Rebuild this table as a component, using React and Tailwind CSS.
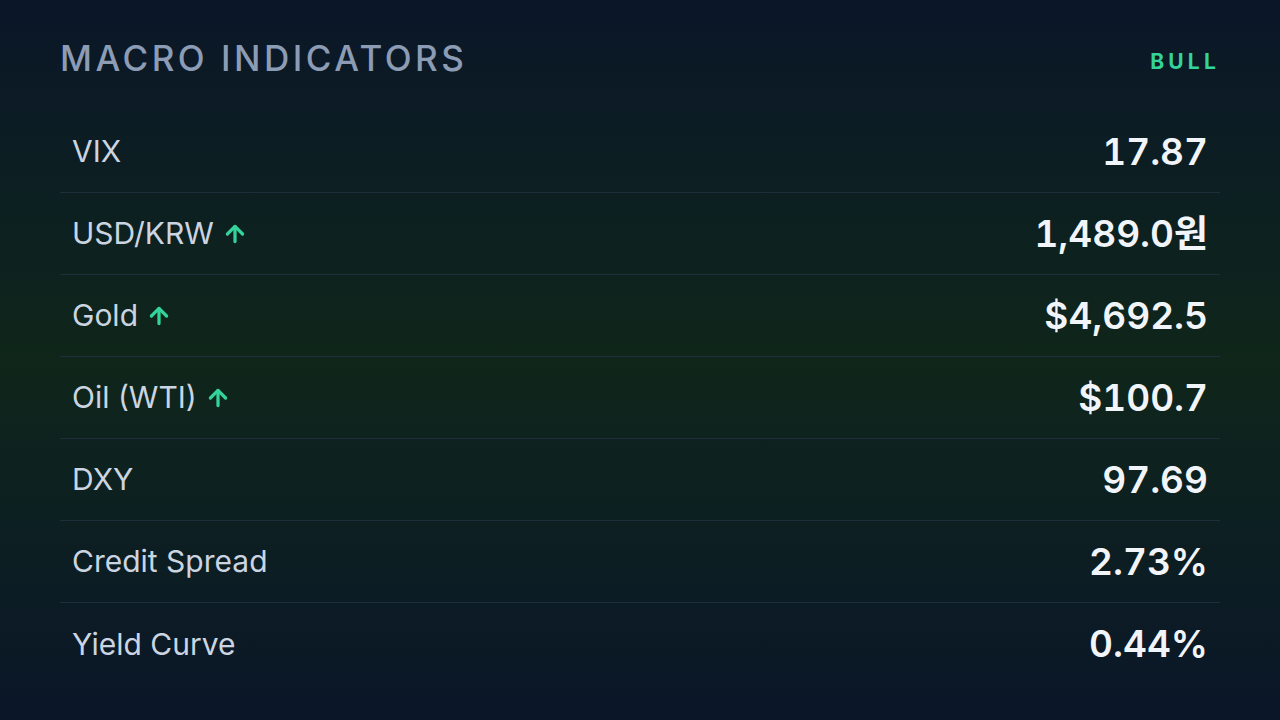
import { ArrowUp } from 'lucide-react'

const rows = [
  { label: 'VIX', value: '17.87' },
  { label: 'USD/KRW', value: '1,489.0원', up: true },
  { label: 'Gold', value: '$4,692.5', up: true },
  { label: 'Oil (WTI)', value: '$100.7', up: true },
  { label: 'DXY', value: '97.69' },
  { label: 'Credit Spread', value: '2.73%' },
  { label: 'Yield Curve', value: '0.44%' },
]

export default function App() {
  return (
    <div
      className="min-h-screen w-full bg-gradient-to-b from-[#0b1628] via-[#0f261a] to-[#0b1628] px-[60px] pt-[38px]"
      style={{ fontFamily: 'Inter, "Noto Sans CJK KR", sans-serif' }}
    >
      <div className="flex items-center justify-between">
        <h1 className="text-[35px] leading-[40px] font-medium tracking-[0.1em] text-[#8c9cb5]">
          MACRO INDICATORS
        </h1>
        <span className="mt-[8px] text-[21px] leading-[28px] font-bold tracking-[0.2em] text-[#34d399]">
          BULL
        </span>
      </div>

      <div className="mt-[33px]">
        {rows.map((r, i) => (
          <div
            key={r.label}
            className={`flex h-[82px] items-center justify-between px-3 ${i < rows.length - 1 ? 'border-b border-[#1f2e3a]' : ''}`}
          >
            <div className="flex items-center gap-[8px] text-[30px] text-[#cbd5e1]">
              <span>{r.label}</span>
              {r.up && <ArrowUp size={26} strokeWidth={3} className="text-[#34d399]" />}
            </div>
            <span className="text-[37px] font-semibold tabular-nums text-[#f1f5f9]">{r.value}</span>
          </div>
        ))}
      </div>
    </div>
  )
}
